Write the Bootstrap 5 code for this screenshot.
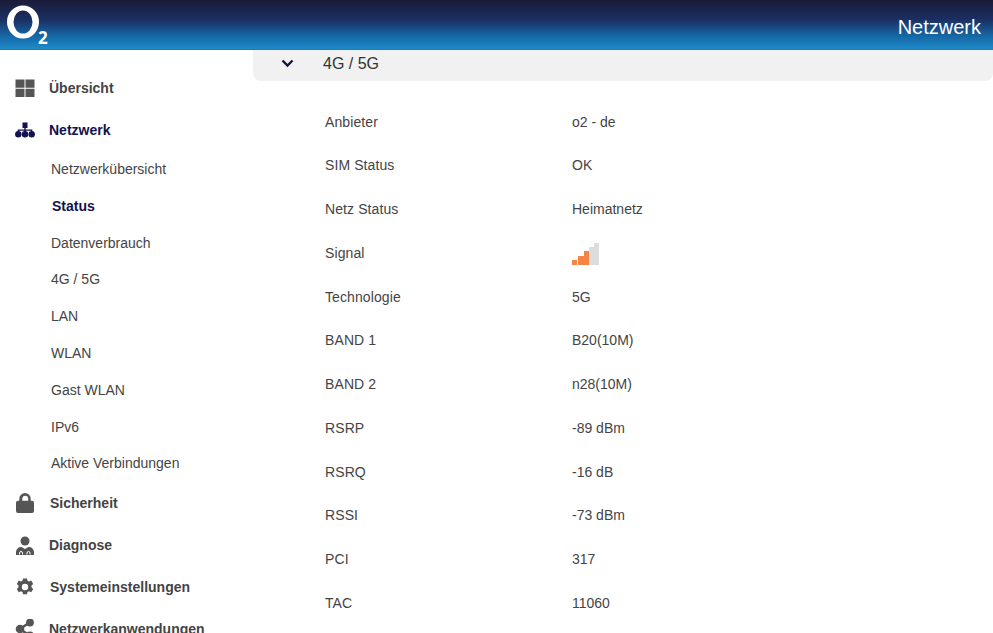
<!DOCTYPE html>
<html lang="de"><head><meta charset="utf-8"><title>Netzwerk</title>
<link rel="stylesheet" href="https://cdn.jsdelivr.net/npm/bootstrap@5.3.0/dist/css/bootstrap.min.css">
<style>
html,body{height:633px;overflow:hidden;background:#fff}
body{font-family:"Liberation Sans",Arial,sans-serif;font-size:14px;color:#444}
.topbar{height:50px;background:linear-gradient(180deg,#1a1b38 0%,#1b2f63 40%,#156aa8 75%,#1f8ac9 100%);color:#fff;border-bottom:1px solid #1a7cb8}
.o2logo{width:50px;height:46px;margin-left:5px;margin-top:3px;display:block}
.toptitle{font-size:20px;margin-right:12px;line-height:54px}
.sidecol{width:253px;padding-top:17px;flex:none}
.mainitem{height:42px;padding-left:15px;font-weight:700;font-size:14px;color:#444;text-decoration:none}
.mainitem svg{width:20px;height:20px;fill:#555;flex:none;margin-right:14px}
.mainitem.wider svg{margin-right:15px}
.mainitem.is-on{color:#13134f}
.mainitem.is-on svg{fill:#13134f}
.subitem{height:36.8px;padding-left:51px;color:#444;font-size:14px;text-decoration:none}
.subitem.is-on{color:#13134f;font-weight:700;padding-left:52px}
.subgroup{margin-top:.1px;margin-bottom:-.1px}
.panelhead{height:31px;background:#f1f1f1;border-radius:0 0 8px 8px;padding-left:28px;padding-bottom:4px;font-size:16px;color:#333}
.panelhead svg{width:13px;height:9px;margin-right:29px;stroke:#13134f;fill:none;stroke-width:2.4}
.datarow{height:43.75px;padding-left:72px;color:#444}
.datalabel{width:247px;flex:none;letter-spacing:.1px}
.datalist{padding-top:19.2px}
.sigbars{height:22px;margin-top:1px}
.sigbars i{display:block;width:5px;background:#dcdcdc}
.sigbars i.lit{background:#f58545}
.sigbars i:first-child{margin-right:1px}
.sigbars i:nth-child(2){width:6px}
</style></head><body>
<header class="topbar d-flex justify-content-between">
<svg class="o2logo" viewBox="0 0 50 46" role="img" aria-label="O2"><path fill="#fff" fill-rule="evenodd" d="M2 19a16 16.500 0 1 0 32 0a16 16.500 0 1 0-32 0zM8.500 19a9.500 11.500 0 1 1 19 0a9.500 11.500 0 1 1-19 0z"/><text x="33" y="41" font-family="Open Sans" font-weight="700" font-size="17" fill="#fff">2</text></svg>
<div class="toptitle">Netzwerk</div>
</header>
<div class="d-flex">
<nav class="sidecol">
<a class="mainitem d-flex align-items-center" href="#"><svg viewBox="0 0 20 20"><path d="M.5 1.500h9v8.200h-9zM10.500 1.500h9v8.200h-9zM.5 10.800h9V19h-9zM10.500 10.800h9V19h-9z"/></svg>Übersicht</a>
<a class="mainitem is-on d-flex align-items-center" href="#"><svg viewBox="0 0 20 20"><path d="M7.500 2.500h5v5.500h-1.800v1.600h6.600V12h-1.400v-1.200h-5.200V12H9.300v-1.200H4.100V12H2.700V9.600h6.600V8H7.500z"/><circle cx="3.300" cy="14.300" r="3.200"/><circle cx="10" cy="14.300" r="3.200"/><circle cx="16.700" cy="14.300" r="3.200"/></svg>Netzwerk</a>
<div class="subgroup">
<a class="subitem d-flex align-items-center" href="#">Netzwerkübersicht</a>
<a class="subitem is-on d-flex align-items-center" href="#">Status</a>
<a class="subitem d-flex align-items-center" href="#">Datenverbrauch</a>
<a class="subitem d-flex align-items-center" href="#">4G / 5G</a>
<a class="subitem d-flex align-items-center" href="#">LAN</a>
<a class="subitem d-flex align-items-center" href="#">WLAN</a>
<a class="subitem d-flex align-items-center" href="#">Gast WLAN</a>
<a class="subitem d-flex align-items-center" href="#">IPv6</a>
<a class="subitem d-flex align-items-center" href="#">Aktive Verbindungen</a>
</div>
<a class="mainitem wider d-flex align-items-center" href="#"><svg viewBox="0 0 20 20"><path fill-rule="evenodd" d="M4.300 7.700V5.700a5.700 5.700 0 0 1 11.400 0v2h1.300a2 2 0 0 1 2 2V18a2 2 0 0 1-2 2H3a2 2 0 0 1-2-2V9.700a2 2 0 0 1 2-2zm3 0h5.900V5.700a2.950 2.950 0 0 0-5.900 0z"/></svg>Sicherheit</a>
<a class="mainitem d-flex align-items-center" href="#"><svg viewBox="0 0 20 20"><circle cx="10" cy="6" r="4.500"/><path d="M1 20v-2.500c0-3.500 2.500-5.500 5.500-5.500L10 14l3.500-2c3 0 5.500 2 5.500 5.500V20z"/><path d="M4.500 19.500V18a1.500 1.500 0 0 1 3 0v1.500M12 19.500V18a1.500 1.500 0 0 1 3 0v1.500" fill="none" stroke="#fff" stroke-width="1"/></svg>Diagnose</a>
<a class="mainitem wider d-flex align-items-center" href="#"><svg viewBox="0 0 20 20"><path fill-rule="evenodd" d="M8 1.500h4l.5 2.300 1.500.7 2.200-1 2 3.400-1.700 1.600v1.800l1.700 1.600-2 3.400-2.200-1-1.500.7-.5 2.300H8l-.5-2.300-1.500-.7-2.200 1-2-3.400 1.700-1.600V8.500L1.800 6.900l2-3.400 2.200 1 1.500-.7zM10 6.800a3.200 3.200 0 1 0 0 6.400 3.200 3.200 0 0 0 0-6.400z"/></svg>Systemeinstellungen</a>
<a class="mainitem d-flex align-items-center" href="#"><svg viewBox="0 0 20 20"><circle cx="15" cy="3.500" r="3.900"/><circle cx="5" cy="10" r="4.300"/><circle cx="15" cy="16.500" r="3.900"/><path d="M4 9l10-6.500 1.500 2L5.500 11zM5.500 9l10 6.500-1.500 2L4 11z"/></svg>Netzwerkanwendungen</a>
</nav>
<main class="flex-grow-1">
<div class="panelhead d-flex align-items-center"><svg viewBox="0 0 13 9"><path d="M1.500 1.500l5 5 5-5"/></svg>4G / 5G</div>
<div class="datalist">
<div class="datarow d-flex align-items-center"><div class="datalabel">Anbieter</div><div>o2 - de</div></div>
<div class="datarow d-flex align-items-center"><div class="datalabel">SIM Status</div><div>OK</div></div>
<div class="datarow d-flex align-items-center"><div class="datalabel">Netz Status</div><div>Heimatnetz</div></div>
<div class="datarow d-flex align-items-center"><div class="datalabel">Signal</div><div class="sigbars d-flex align-items-end" aria-label="Signal"><i class="lit" style="height:5px"></i><i class="lit" style="height:9px"></i><i class="lit" style="height:14px"></i><i style="height:18px"></i><i style="height:22px"></i></div></div>
<div class="datarow d-flex align-items-center"><div class="datalabel">Technologie</div><div>5G</div></div>
<div class="datarow d-flex align-items-center"><div class="datalabel">BAND 1</div><div>B20(10M)</div></div>
<div class="datarow d-flex align-items-center"><div class="datalabel">BAND 2</div><div>n28(10M)</div></div>
<div class="datarow d-flex align-items-center"><div class="datalabel">RSRP</div><div>-89 dBm</div></div>
<div class="datarow d-flex align-items-center"><div class="datalabel">RSRQ</div><div>-16 dB</div></div>
<div class="datarow d-flex align-items-center"><div class="datalabel">RSSI</div><div>-73 dBm</div></div>
<div class="datarow d-flex align-items-center"><div class="datalabel">PCI</div><div>317</div></div>
<div class="datarow d-flex align-items-center"><div class="datalabel">TAC</div><div>11060</div></div>
</div>
</main>
</div>
<script src="https://cdn.jsdelivr.net/npm/bootstrap@5.3.0/dist/js/bootstrap.bundle.min.js"></script>
</body></html>
